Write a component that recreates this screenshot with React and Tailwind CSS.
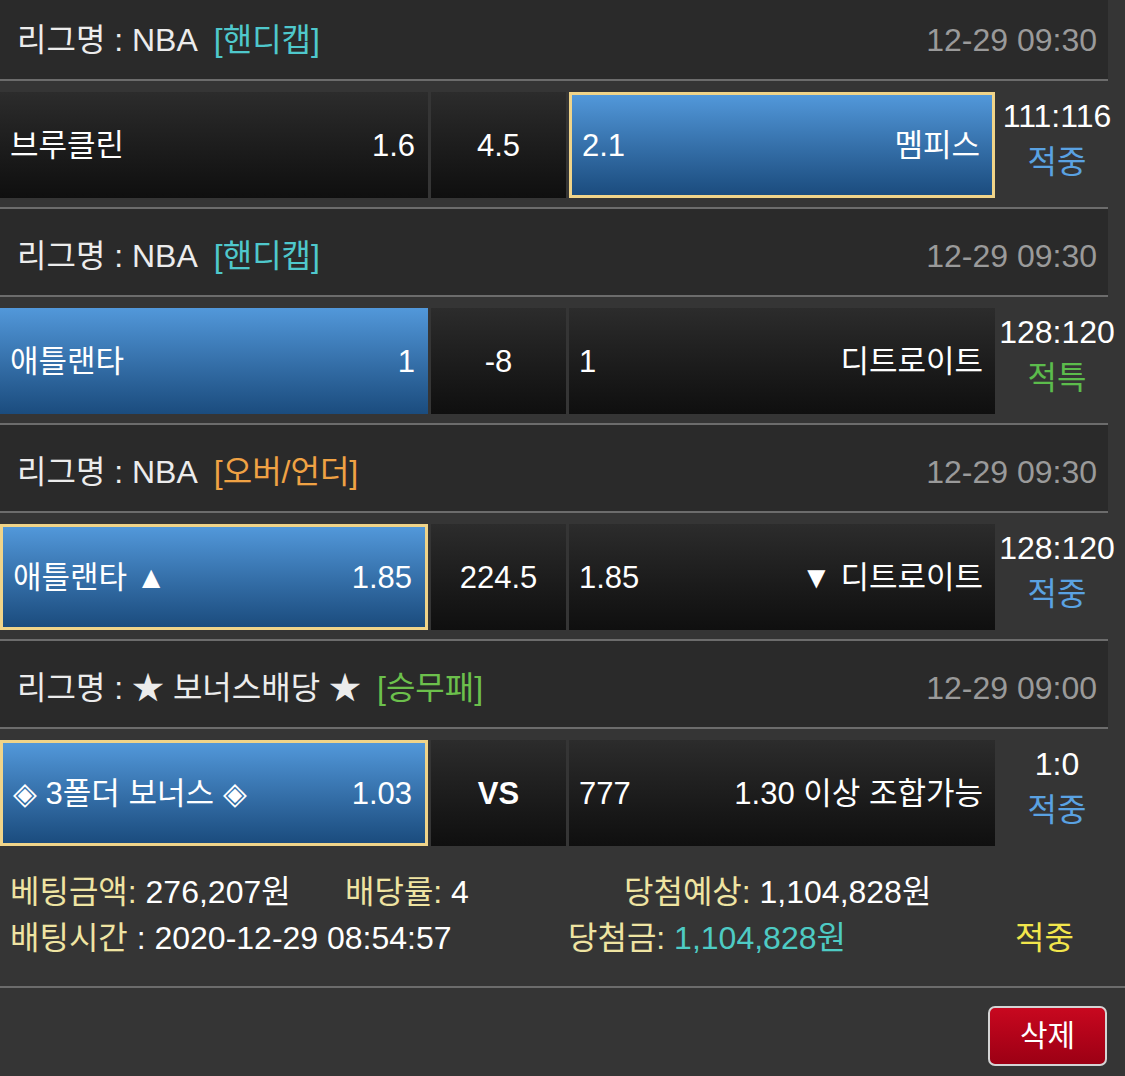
import React from "react";

const games = [
  {
    league: "NBA",
    tag: "[핸디캡]",
    tagColor: "text-[#4fc8cc]",
    date: "12-29 09:30",
    home: "브루클린",
    homeOdd: "1.6",
    mid: "4.5",
    awayOdd: "2.1",
    away: "멤피스",
    sel: "away",
    border: true,
    score: "111:116",
    result: "적중",
    resultColor: "text-[#5aa2e2]",
  },
  {
    league: "NBA",
    tag: "[핸디캡]",
    tagColor: "text-[#4fc8cc]",
    date: "12-29 09:30",
    home: "애틀랜타",
    homeOdd: "1",
    mid: "-8",
    awayOdd: "1",
    away: "디트로이트",
    sel: "home",
    border: false,
    score: "128:120",
    result: "적특",
    resultColor: "text-[#5cbc4c]",
  },
  {
    league: "NBA",
    tag: "[오버/언더]",
    tagColor: "text-[#f0a244]",
    date: "12-29 09:30",
    home: "애틀랜타 ▲",
    homeOdd: "1.85",
    mid: "224.5",
    awayOdd: "1.85",
    away: "▼ 디트로이트",
    sel: "home",
    border: true,
    score: "128:120",
    result: "적중",
    resultColor: "text-[#5aa2e2]",
  },
  {
    league: "★ 보너스배당 ★",
    tag: "[승무패]",
    tagColor: "text-[#6cc04c]",
    date: "12-29 09:00",
    home: "◈ 3폴더 보너스 ◈",
    homeOdd: "1.03",
    mid: "VS",
    midBold: true,
    awayOdd: "777",
    away: "1.30 이상 조합가능",
    sel: "home",
    border: true,
    score: "1:0",
    result: "적중",
    resultColor: "text-[#5aa2e2]",
  },
];

function Cell({ selected, border, className, children }) {
  const bg = selected
    ? "bg-gradient-to-b from-[#5298da] to-[#1b4c7e]"
    : "bg-gradient-to-b from-[#2c2c2c] to-[#0f0f0f]";
  const b = selected && border ? "border-[3px] border-[#f0d489]" : "";
  return (
    <div className={`h-[106px] shrink-0 flex items-center ${bg} ${b} ${className}`}>
      {children}
    </div>
  );
}

function Game({ g, last }) {
  return (
    <div>
      <div className="h-[86px] w-[1108px] bg-[#2a2a2a] flex items-center justify-between pt-[8px] pl-[17px] pr-[11px] text-[32px] leading-none">
        <div className="flex items-center text-[#ececec]">
          <span>리그명 : {g.league}</span>
          <span className={`ml-[16px] ${g.tagColor}`}>{g.tag}</span>
        </div>
        <span className="text-[#9a9a9a]">{g.date}</span>
      </div>
      <div className="h-[2px] w-[1108px] bg-[#6c6c6c]" />
      <div className="h-[126px] w-[1125px] pt-[11px] flex text-white text-[31px] leading-none">
        <Cell
          selected={g.sel === "home"}
          border={g.border}
          className="w-[428px] justify-between pl-[10px] pr-[13px]"
        >
          <span>{g.home}</span>
          <span>{g.homeOdd}</span>
        </Cell>
        <div className="w-[3px] shrink-0" />
        <Cell className="w-[135px] justify-center">
          <span className={g.midBold ? "font-bold" : ""}>{g.mid}</span>
        </Cell>
        <div className="w-[3px] shrink-0" />
        <Cell
          selected={g.sel === "away"}
          border={g.border}
          className="w-[426px] justify-between pl-[10px] pr-[12px]"
        >
          <span>{g.awayOdd}</span>
          <span>{g.away}</span>
        </Cell>
        <div className="w-[124px] shrink-0 flex flex-col items-center text-[32px] pt-[1px]">
          <div className="h-[46px] leading-[46px] whitespace-nowrap">{g.score}</div>
          <div className={`h-[46px] leading-[46px] ${g.resultColor}`}>{g.result}</div>
        </div>
      </div>
      {!last && <div className="h-[2px] w-[1108px] bg-[#6c6c6c]" />}
    </div>
  );
}

export default function App() {
  return (
    <div className="w-[1125px] h-[1076px] overflow-hidden bg-[#353535] font-['Liberation_Sans','Noto_Sans_CJK_KR',sans-serif]">
      <div className="-mt-[7px]">
        {games.map((g, i) => (
          <Game key={i} g={g} last={i === games.length - 1} />
        ))}
        <div className="h-[131px] pt-[14px] text-[32px] leading-[46px] text-white whitespace-nowrap">
          <div className="flex pl-[10px]">
            <div className="w-[335px] shrink-0">
              <span className="text-[#efe4a2]">베팅금액:</span> 276,207원
            </div>
            <div className="w-[279px] shrink-0">
              <span className="text-[#efe4a2]">배당률:</span> 4
            </div>
            <div>
              <span className="text-[#efe4a2]">당첨예상:</span> 1,104,828원
            </div>
          </div>
          <div className="flex pl-[10px]">
            <div className="w-[558px] shrink-0">
              <span className="text-[#efe4a2]">배팅시간</span> : 2020-12-29 08:54:57
            </div>
            <div className="w-[447px] shrink-0">
              <span className="text-[#efe4a2]">당첨금:</span>{" "}
              <span className="text-[#4ecbc4]">1,104,828원</span>
            </div>
            <div className="text-[#f2e64c]">적중</div>
          </div>
        </div>
        <div className="h-[2px] w-full bg-[#6c6c6c]" />
        <div className="flex justify-end pt-[18px] pr-[18px]">
          <button className="w-[119px] h-[60px] rounded-[7px] border-2 border-[#d4d4d4] bg-gradient-to-b from-[#c8081f] to-[#9c0014] text-white text-[30px] leading-none flex items-center justify-center">
            삭제
          </button>
        </div>
      </div>
    </div>
  );
}
